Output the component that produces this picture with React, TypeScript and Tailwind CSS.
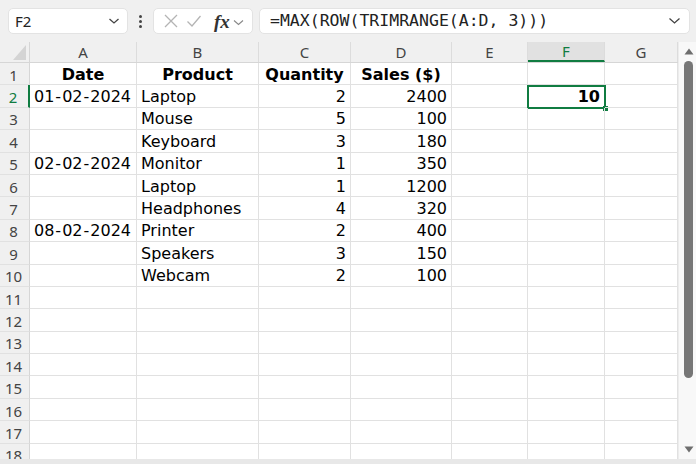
import React from "react";

const cols = [
  { key: "A", w: "w-[107px]" },
  { key: "B", w: "w-[122px]" },
  { key: "C", w: "w-[92px]" },
  { key: "D", w: "w-[101px]" },
  { key: "E", w: "w-[76px]" },
  { key: "F", w: "w-[77px]" },
  { key: "G", w: "w-[73px]" },
];

type Cell = { t: string; align?: "l" | "r" | "c"; bold?: boolean };

const data: (Cell | null)[][] = [
  [
    { t: "Date", align: "c", bold: true },
    { t: "Product", align: "c", bold: true },
    { t: "Quantity", align: "c", bold: true },
    { t: "Sales ($)", align: "c", bold: true },
  ],
  [{ t: "01-02-2024" }, { t: "Laptop" }, { t: "2", align: "r" }, { t: "2400", align: "r" }],
  [null, { t: "Mouse" }, { t: "5", align: "r" }, { t: "100", align: "r" }],
  [null, { t: "Keyboard" }, { t: "3", align: "r" }, { t: "180", align: "r" }],
  [{ t: "02-02-2024" }, { t: "Monitor" }, { t: "1", align: "r" }, { t: "350", align: "r" }],
  [null, { t: "Laptop" }, { t: "1", align: "r" }, { t: "1200", align: "r" }],
  [null, { t: "Headphones" }, { t: "4", align: "r" }, { t: "320", align: "r" }],
  [{ t: "08-02-2024" }, { t: "Printer" }, { t: "2", align: "r" }, { t: "400", align: "r" }],
  [null, { t: "Speakers" }, { t: "3", align: "r" }, { t: "150", align: "r" }],
  [null, { t: "Webcam" }, { t: "2", align: "r" }, { t: "100", align: "r" }],
];

function renderText(t: string) {
  if (/^\d\d-\d\d-\d\d\d\d$/.test(t)) {
    const parts = t.split("-");
    return (
      <>
        {parts[0]}
        <span className="mx-[1px]">-</span>
        {parts[1]}
        <span className="mx-[1px]">-</span>
        {parts[2]}
      </>
    );
  }
  return t;
}

export default function App() {
  const rows = Array.from({ length: 18 }, (_, i) => i + 1);
  return (
    <div
      className="w-[696px] h-[464px] overflow-hidden bg-[#f0f0f0] flex flex-col"
      style={{ fontFamily: '"Noto Sans", "Open Sans", sans-serif' }}
    >
      {/* Formula bar */}
      <div className="h-[42px] shrink-0 flex items-start pt-[8px] pl-[8px]">
        <div className="w-[120px] h-[26px] bg-white rounded-[5px] border border-[#e3e3e3] flex items-center pl-[6px] pr-[7px] justify-between">
          <span className="text-[15px] text-[#222] leading-none">F2</span>
          <svg width="12" height="8" viewBox="0 0 12 8" fill="none">
            <path d="M1.5 2 L6 6 L10.5 2" stroke="#444" strokeWidth="1.3" />
          </svg>
        </div>
        <div className="w-[25px] h-[26px] flex flex-col items-center justify-center gap-[2px]">
          <div className="w-[3px] h-[3px] rounded-full bg-[#444]" />
          <div className="w-[3px] h-[3px] rounded-full bg-[#444]" />
          <div className="w-[3px] h-[3px] rounded-full bg-[#444]" />
        </div>
        <div className="w-[100px] h-[26px] bg-white rounded-[5px] border border-[#e3e3e3] flex items-center pl-[9px]">
          <svg width="16" height="16" viewBox="0 0 16 16" fill="none">
            <path d="M2 2 L14 14 M14 2 L2 14" stroke="#b4b4b4" strokeWidth="1.3" />
          </svg>
          <svg className="ml-[7px]" width="16" height="16" viewBox="0 0 16 16" fill="none">
            <path d="M1.5 8.5 L6 13 L14.5 3" stroke="#b4b4b4" strokeWidth="1.3" />
          </svg>
          <span
            className="ml-[12px] text-[19px] italic font-bold leading-none text-[#333]"
            style={{ fontFamily: '"Liberation Serif", serif' }}
          >
            fx
          </span>
          <svg className="ml-[3px] mt-[2px]" width="11" height="7" viewBox="0 0 11 7" fill="none">
            <path d="M1 1.5 L5.5 5.5 L10 1.5" stroke="#888" strokeWidth="1.1" />
          </svg>
        </div>
        <div className="ml-[6px] w-[431px] h-[26px] bg-white rounded-[5px] border border-[#e3e3e3] flex items-center pl-[10px] pr-[8px] justify-between">
          <span
            className="text-[16.5px] text-[#222] leading-none"
            style={{ fontFamily: '"DejaVu Sans Mono", "Liberation Mono", monospace' }}
          >
            =MAX(ROW(TRIMRANGE(A:D, 3)))
          </span>
          <svg width="13" height="8" viewBox="0 0 13 8" fill="none">
            <path d="M1.5 1.5 L6.5 6 L11.5 1.5" stroke="#444" strokeWidth="1.3" />
          </svg>
        </div>
      </div>

      {/* Grid + scrollbar */}
      <div className="h-[417px] shrink-0 flex">
        <div className="w-[678px] bg-white overflow-hidden">
          {/* column headers */}
          <div className="h-[21px] flex bg-[#f0f0f0] border-b border-[#d6d6d6]">
            <div className="w-[30px] h-full relative border-r border-[#d6d6d6]">
              <svg className="absolute right-[3px] bottom-[2px]" width="13" height="15" viewBox="0 0 13 15">
                <path d="M13 0 L13 15 L0 15 Z" fill="#d4d4d4" />
              </svg>
            </div>
            {cols.map((c) => (
              <div
                key={c.key}
                className={`${c.w} h-full shrink-0 flex items-center justify-center pt-[1px] text-[15px] leading-none border-r border-[#dcdcdc] ${
                  c.key === "F"
                    ? "bg-[#e1e1e1] text-[#107c41] border-b-2 border-b-[#107c41]"
                    : "text-[#444]"
                }`}
              >
                {c.key}
              </div>
            ))}
          </div>
          {/* rows */}
          {rows.map((r) => {
            const rowData = data[r - 1] || [];
            return (
              <div key={r} className="h-[22.4px] flex">
                <div
                  className={`w-[30px] shrink-0 h-full flex items-center justify-center pt-[3px] text-[15px] leading-none bg-[#f0f0f0] pr-[2px] ${
                    r === 2
                      ? "text-[#107c41] border-r-2 border-[#107c41] bg-[#e6e6e6]"
                      : "text-[#444] border-r border-[#d6d6d6]"
                  } border-b border-b-[#e1e1e1]`}
                >
                  {r}
                </div>
                {cols.map((c, ci) => {
                  const cell = rowData[ci] || null;
                  const isF2 = r === 2 && c.key === "F";
                  return (
                    <div
                      key={c.key}
                      className={`${c.w} shrink-0 h-full relative border-r border-b border-[#e1e1e1] flex items-center pt-[2px] text-[16px] text-black whitespace-nowrap ${
                        cell?.align === "r" || isF2
                          ? "justify-end pr-[4px]"
                          : cell?.align === "c"
                          ? "justify-center"
                          : "justify-start pl-[4px]"
                      } ${cell?.bold || isF2 ? "font-bold" : ""}`}
                      style={{ fontFamily: '"DejaVu Sans", Verdana, sans-serif' }}
                    >
                      {cell ? renderText(cell.t) : isF2 ? "10" : null}
                      {isF2 && (
                        <div className="absolute left-[-1px] top-[0px] right-[-2px] bottom-[-2px] border-2 border-[#107c41]">
                          <div className="absolute right-[-4px] bottom-[-4px] w-[5px] h-[5px] bg-[#107c41]" />
                        </div>
                      )}
                    </div>
                  );
                })}
              </div>
            );
          })}
        </div>
        {/* vertical scrollbar */}
        <div className="w-[18px] bg-[#f8f8f8] border-l border-[#ececec] flex flex-col items-center pl-[2px]">
          <svg className="mt-[6px]" width="10" height="7" viewBox="0 0 10 7">
            <path d="M5 0.5 L9.5 6.5 L0.5 6.5 Z" fill="#6e6e6e" />
          </svg>
          <div className="mt-[6px] w-[9px] h-[317px] rounded-full bg-[#767676]" />
          <div className="flex-1" />
          <svg className="mb-[6px]" width="10" height="7" viewBox="0 0 10 7">
            <path d="M0.5 0.5 L9.5 0.5 L5 6.5 Z" fill="#6e6e6e" />
          </svg>
        </div>
      </div>
      <div className="h-[5px] shrink-0 bg-[#e8e8e8]" />
    </div>
  );
}
